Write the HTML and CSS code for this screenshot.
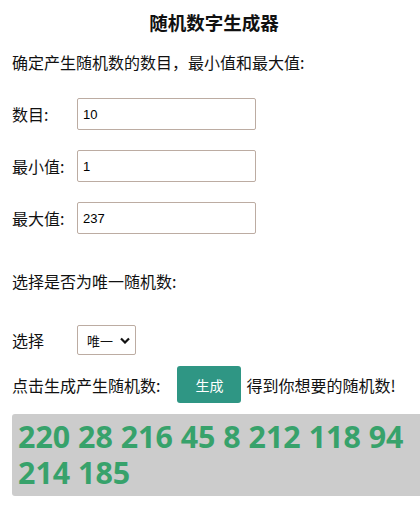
FILE: index.html
```html
<!DOCTYPE html>
<html lang="zh-CN">
<head>
    <meta charset="UTF-8">
    <meta name="viewport" content="width=device-width, initial-scale=1.0">
    <title>随机数字生成器</title>
    <link rel="stylesheet" href="styles.css">
</head>
<body>
    <h3 class="title">随机数字生成器</h3>
    <p class="intro">确定产生随机数的数目，最小值和最大值:</p>

    <div class="field">
        <label for="count">数目:</label>
        <input id="count" type="text" value="10">
    </div>
    <div class="field">
        <label for="min">最小值:</label>
        <input id="min" type="text" value="1">
    </div>
    <div class="field">
        <label for="max">最大值:</label>
        <input id="max" type="text" value="237">
    </div>

    <p class="unique-tip">选择是否为唯一随机数:</p>

    <div class="field select-row">
        <label for="mode">选择</label>
        <div class="select-box">
            <span>唯一</span>
            <svg width="10" height="7" viewBox="0 0 10 7"><path d="M1 1.5 L5 5.5 L9 1.5" fill="none" stroke="#111" stroke-width="2.2"/></svg>
        </div>
    </div>

    <div class="generate-row">
        <span>点击生成产生随机数:</span>
        <button class="btn">生成</button>
        <span>得到你想要的随机数!</span>
    </div>

    <div class="result">220 28 216 45 8 212 118 94 214 185</div>
</body>
</html>
```

FILE: styles.css
```css
* {
    margin: 0;
    padding: 0;
    box-sizing: border-box;
}

body {
    font-family: "Noto Sans CJK SC", "Liberation Sans", sans-serif;
    font-size: 16px;
    color: #111;
    background: #fff;
    padding: 0 0 0 12px;
    overflow: hidden;
}

.title {
    font-size: 18.5px;
    font-weight: bold;
    text-align: center;
    line-height: 24px;
    margin: 10px 0 0 0;
    padding-right: 4px;
}

.intro {
    line-height: 24px;
    margin-top: 16px;
}

.field {
    display: flex;
    align-items: center;
    margin-top: 20px;
}

.intro + .field {
    margin-top: 24px;
}

.field label {
    width: 65px;
    line-height: 24px;
}

.field input {
    width: 179px;
    height: 32px;
    border: 1px solid #bcaca2;
    border-radius: 2px;
    padding: 0 5px;
    font-family: "Liberation Sans", Arial, sans-serif;
    font-size: 13px;
    color: #000;
}

.unique-tip {
    line-height: 24px;
    margin-top: 35px;
}

.select-row {
    margin-top: 32px;
}

.select-box {
    width: 59px;
    height: 30px;
    border: 1px solid #bcaca2;
    border-radius: 2px;
    display: flex;
    align-items: center;
    justify-content: space-between;
    padding: 0 5px 0 9px;
    font-size: 13px;
}

.generate-row {
    display: flex;
    align-items: center;
    margin-top: 11px;
    line-height: 24px;
}

.btn {
    width: 64px;
    height: 37px;
    margin: 0 5px 0 17px;
    border: none;
    border-radius: 3px;
    background: #2f9684;
    color: #fff;
    font-family: "Noto Sans CJK SC", sans-serif;
    font-size: 14px;
}

.result {
    margin-top: 11px;
    height: 82px;
    background: #cccccc;
    border-radius: 3px;
    padding: 5px 6px;
    font-family: "Open Sans", "Noto Sans", sans-serif;
    font-weight: bold;
    font-size: 30.4px;
    line-height: 36px;
    color: #37a26b;
    width: 420px;
}
```
